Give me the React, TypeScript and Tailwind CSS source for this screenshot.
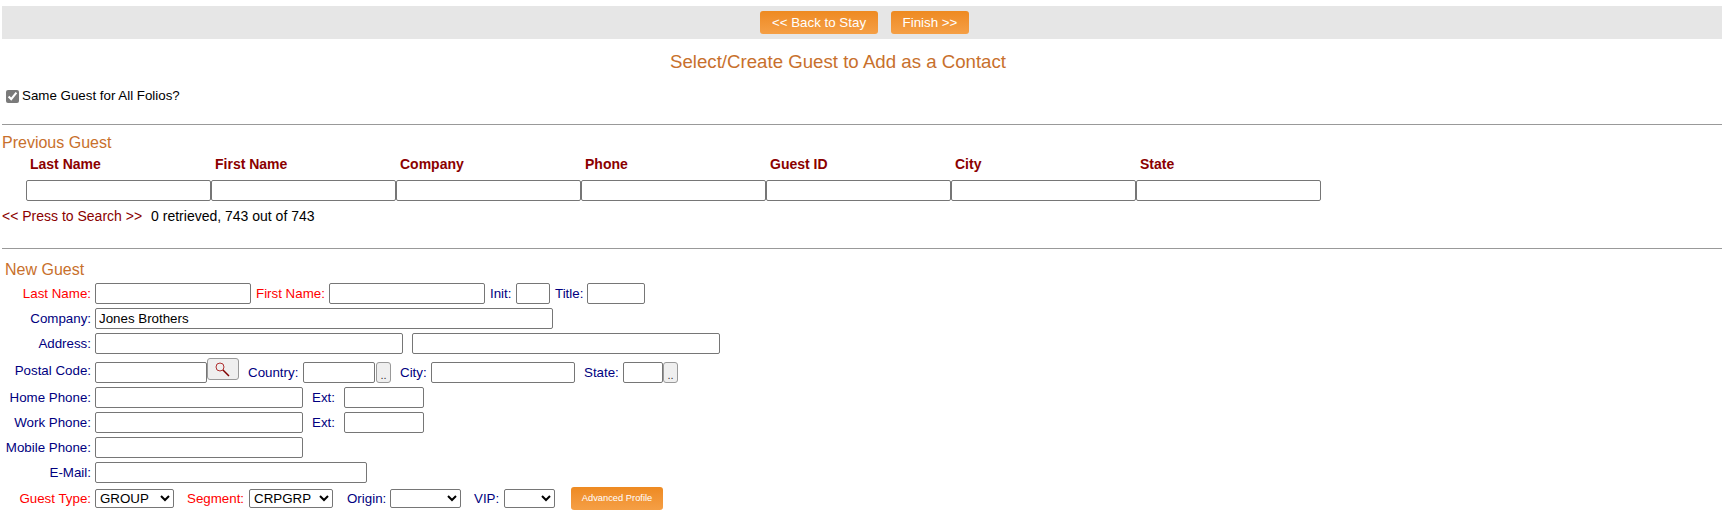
import React from 'react';

const inputCls = 'h-[21px] border border-[#767676] rounded-[2px] bg-white px-[3px] text-[13.33px] text-black outline-none';
const dotsCls = 'h-[21px] w-[15px] border border-[#999999] rounded-[3px] bg-[#efefef] text-[11px] leading-[24px] text-[#333] text-center';
const selectCls = 'h-[19px] border border-[#767676] rounded-[2px] bg-white text-[13.33px] text-black';
const orangeCls = 'rounded-[3px] bg-gradient-to-b from-[#ee8a20] to-[#f59f45] text-white text-center';

const columns = ['Last Name', 'First Name', 'Company', 'Phone', 'Guest ID', 'City', 'State'];

function Label({ children, red, className }: { children: React.ReactNode; red?: boolean; className?: string }) {
  return <span className={`${red ? 'text-[#ff0000]' : 'text-[#000080]'} whitespace-nowrap ${className ?? ''}`}>{children}</span>;
}

export default function App() {
  return (
    <div className="bg-white h-[518px] overflow-hidden pl-[2px] pt-[6px] text-[13.33px] text-black font-['Liberation_Sans',Arial,sans-serif]">
      {/* top bar */}
      <div className="h-[33px] bg-[#e6e6e6] flex justify-center gap-[13px] pt-[5px] pl-[5px]">
        <button className={`${orangeCls} w-[118px] h-[23px] text-[13.33px]`}>&lt;&lt; Back to Stay</button>
        <button className={`${orangeCls} w-[78px] h-[23px] text-[13.33px]`}>Finish &gt;&gt;</button>
      </div>
      <h1 className="mt-[11px] h-[24px] leading-[24px] pl-[668px] text-[18.67px] text-[#c8702c] whitespace-nowrap">
        Select/Create Guest to Add as a Contact
      </h1>

      <label className="mt-[14px] h-[16px] flex items-center pl-[4px] gap-[3px]">
        <input type="checkbox" defaultChecked className="w-[13px] h-[13px] m-0 accent-[#7a7a7a]" />
        <span>Same Guest for All Folios?</span>
      </label>

      <hr className="mt-[20px] border-0 border-t border-[#999999]" />

      {/* previous guest search */}
      <div className="mt-[9px] h-[17px] leading-[17px] text-[16px] text-[#c8702c]">Previous Guest</div>
      <div className="flex pl-[24px] mt-[4px]">
        {columns.map((c) => (
          <div key={c} className="w-[185px] pl-[4px] h-[18px] leading-[18px] text-[14px] font-bold text-[#8b0000]">{c}</div>
        ))}
      </div>
      <div className="flex pl-[24px] mt-[7px]">
        {columns.map((c) => (
          <input key={c} className={`${inputCls} w-[185px] h-[21px]`} />
        ))}
      </div>
      <div className="mt-[7px] h-[16px] leading-[16px] flex text-[14px]">
        <span className="text-[#8b0000]">&lt;&lt; Press to Search &gt;&gt;</span>
        <span className="ml-[9px]">0 retrieved, 743 out of 743</span>
      </div>

      <hr className="mt-[24px] border-0 border-t border-[#999999]" />

      {/* new guest */}
      <div className="mt-[12px] h-[17px] leading-[17px] pl-[3px] text-[16px] text-[#c8702c]">New Guest</div>
      <div className="mt-[5px] flex flex-col gap-[4px]">
        <div className="flex items-center">
          <Label red className="w-[89px] text-right">Last Name:</Label>
          <input className={`${inputCls} ml-[4px] w-[156px]`} />
          <Label red className="ml-[5px] w-[69px]">First Name:</Label>
          <input className={`${inputCls} ml-[4px] w-[156px]`} />
          <Label className="ml-[5px] w-[21px]">Init:</Label>
          <input className={`${inputCls} ml-[5px] w-[34px]`} />
          <Label className="ml-[5px] w-[28px]">Title:</Label>
          <input className={`${inputCls} ml-[4px] w-[58px]`} />
        </div>
        <div className="flex items-center">
          <Label className="w-[89px] text-right">Company:</Label>
          <input defaultValue="Jones Brothers" className={`${inputCls} ml-[4px] w-[458px]`} />
        </div>
        <div className="flex items-center">
          <Label className="w-[89px] text-right">Address:</Label>
          <input className={`${inputCls} ml-[4px] w-[308px]`} />
          <input className={`${inputCls} ml-[9px] w-[308px]`} />
        </div>
        <div className="flex items-end h-[25px]">
          <Label className="w-[89px] text-right self-center">Postal Code:</Label>
          <input className={`${inputCls} ml-[4px] w-[112px]`} />
          <button className="self-start h-[22px] w-[32px] border border-[#999999] rounded-[3px] bg-[#efefef] flex items-center justify-center">
            <svg width="16" height="16" viewBox="0 0 16 16" fill="none">
              <circle cx="5" cy="6" r="4" stroke="#b03030" strokeWidth="1" />
              <path d="M8 9l6 6" stroke="#800000" strokeWidth="1.5" />
            </svg>
          </button>
          <Label className="ml-[9px] w-[52px] self-center pt-[4px]">Country:</Label>
          <input className={`${inputCls} ml-[3px] w-[72px]`} />
          <div className={`${dotsCls} ml-[1px]`}>..</div>
          <Label className="ml-[9px] w-[26px] self-center pt-[4px]">City:</Label>
          <input className={`${inputCls} ml-[5px] w-[144px]`} />
          <Label className="ml-[9px] w-[35px] self-center pt-[4px]">State:</Label>
          <input className={`${inputCls} ml-[4px] w-[40px]`} />
          <div className={dotsCls}>..</div>
        </div>
        <div className="flex items-center">
          <Label className="w-[89px] text-right">Home Phone:</Label>
          <input className={`${inputCls} ml-[4px] w-[208px]`} />
          <Label className="ml-[9px] w-[24px]">Ext:</Label>
          <input className={`${inputCls} ml-[8px] w-[80px]`} />
        </div>
        <div className="flex items-center">
          <Label className="w-[89px] text-right">Work Phone:</Label>
          <input className={`${inputCls} ml-[4px] w-[208px]`} />
          <Label className="ml-[9px] w-[24px]">Ext:</Label>
          <input className={`${inputCls} ml-[8px] w-[80px]`} />
        </div>
        <div className="flex items-center">
          <Label className="w-[89px] text-right">Mobile Phone:</Label>
          <input className={`${inputCls} ml-[4px] w-[208px]`} />
        </div>
        <div className="flex items-center">
          <Label className="w-[89px] text-right">E-Mail:</Label>
          <input className={`${inputCls} ml-[4px] w-[272px]`} />
        </div>
        <div className="flex items-center h-[23px]">
          <Label red className="w-[89px] text-right">Guest Type:</Label>
          <select defaultValue="GROUP" className={`${selectCls} ml-[4px] w-[79px]`}>
            <option>GROUP</option>
          </select>
          <Label red className="ml-[13px] w-[58px]">Segment:</Label>
          <select defaultValue="CRPGRP" className={`${selectCls} ml-[4px] w-[84px]`}>
            <option>CRPGRP</option>
          </select>
          <Label className="ml-[14px] w-[39px]">Origin:</Label>
          <select className={`${selectCls} ml-[4px] w-[71px]`}>
            <option></option>
          </select>
          <Label className="ml-[13px] w-[26px]">VIP:</Label>
          <select className={`${selectCls} ml-[4px] w-[51px]`}>
            <option></option>
          </select>
          <button className={`${orangeCls} ml-[16px] w-[92px] h-[23px] text-[9.33px]`}>Advanced Profile</button>
        </div>
      </div>
    </div>
  );
}
